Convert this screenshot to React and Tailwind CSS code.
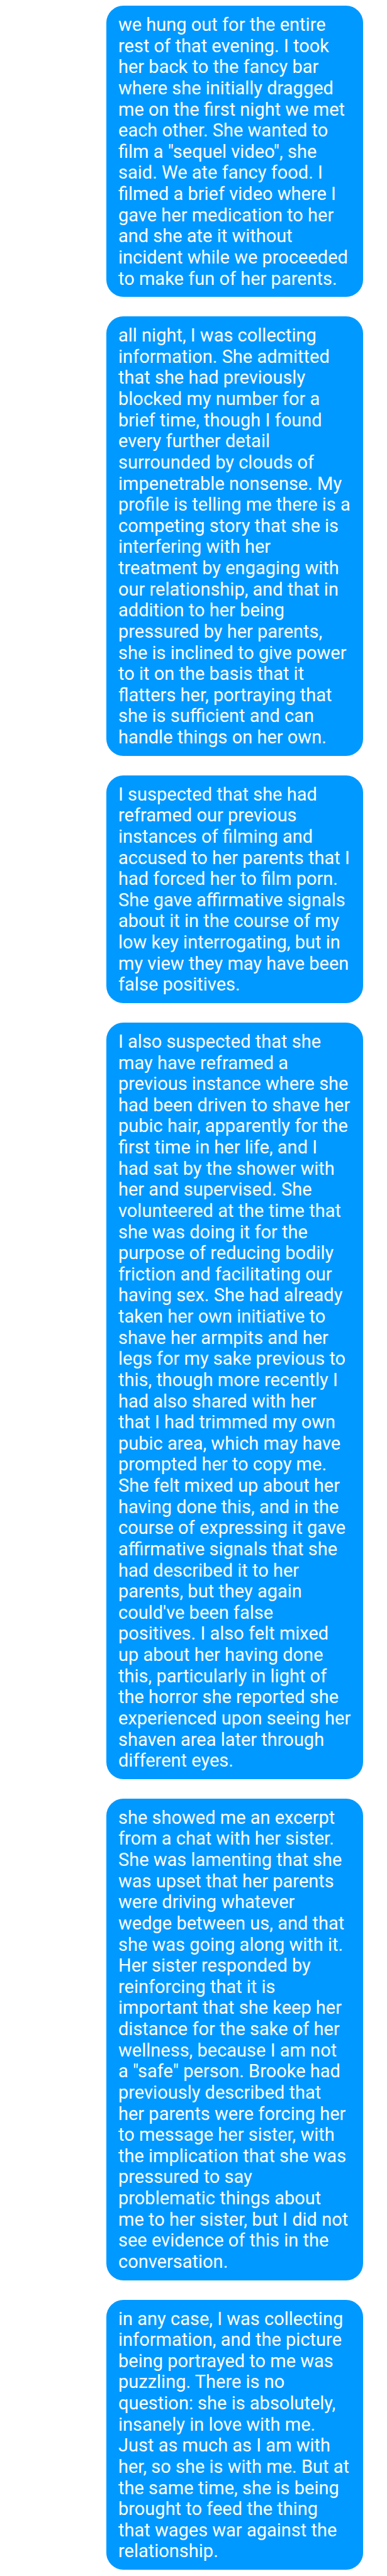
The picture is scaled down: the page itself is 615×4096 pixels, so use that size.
const messages = [
  `we hung out for the entire
rest of that evening. I took
her back to the fancy bar
where she initially dragged
me on the first night we met
each other. She wanted to
film a "sequel video", she
said. We ate fancy food. I
filmed a brief video where I
gave her medication to her
and she ate it without
incident while we proceeded
to make fun of her parents.`,
  `all night, I was collecting
information. She admitted
that she had previously
blocked my number for a
brief time, though I found
every further detail
surrounded by clouds of
impenetrable nonsense. My
profile is telling me there is a
competing story that she is
interfering with her
treatment by engaging with
our relationship, and that in
addition to her being
pressured by her parents,
she is inclined to give power
to it on the basis that it
flatters her, portraying that
she is sufficient and can
handle things on her own.`,
  `I suspected that she had
reframed our previous
instances of filming and
accused to her parents that I
had forced her to film porn.
She gave affirmative signals
about it in the course of my
low key interrogating, but in
my view they may have been
false positives.`,
  `I also suspected that she
may have reframed a
previous instance where she
had been driven to shave her
pubic hair, apparently for the
first time in her life, and I
had sat by the shower with
her and supervised. She
volunteered at the time that
she was doing it for the
purpose of reducing bodily
friction and facilitating our
having sex. She had already
taken her own initiative to
shave her armpits and her
legs for my sake previous to
this, though more recently I
had also shared with her
that I had trimmed my own
pubic area, which may have
prompted her to copy me.
She felt mixed up about her
having done this, and in the
course of expressing it gave
affirmative signals that she
had described it to her
parents, but they again
could've been false
positives. I also felt mixed
up about her having done
this, particularly in light of
the horror she reported she
experienced upon seeing her
shaven area later through
different eyes.`,
  `she showed me an excerpt
from a chat with her sister.
She was lamenting that she
was upset that her parents
were driving whatever
wedge between us, and that
she was going along with it.
Her sister responded by
reinforcing that it is
important that she keep her
distance for the sake of her
wellness, because I am not
a "safe" person. Brooke had
previously described that
her parents were forcing her
to message her sister, with
the implication that she was
pressured to say
problematic things about
me to her sister, but I did not
see evidence of this in the
conversation.`,
  `in any case, I was collecting
information, and the picture
being portrayed to me was
puzzling. There is no
question: she is absolutely,
insanely in love with me.
Just as much as I am with
her, so she is with me. But at
the same time, she is being
brought to feed the thing
that wages war against the
relationship.`,
];

function Bubble({ text }) {
  return (
    <li className="rounded-[27px] bg-[#0099ff] pt-[14px] pr-[15px] pb-3 pl-[19px]">
      <p className="whitespace-pre-line">{text}</p>
    </li>
  );
}

export default function App() {
  return (
    <main className="bg-white pt-[9px] pr-[38px] pb-2 pl-[169px] font-['Roboto',sans-serif] text-[29px] leading-[1.16] text-white">
      <ul className="flex flex-col gap-[31px]">
        {messages.map((text) => (
          <Bubble key={text} text={text} />
        ))}
      </ul>
    </main>
  );
}
